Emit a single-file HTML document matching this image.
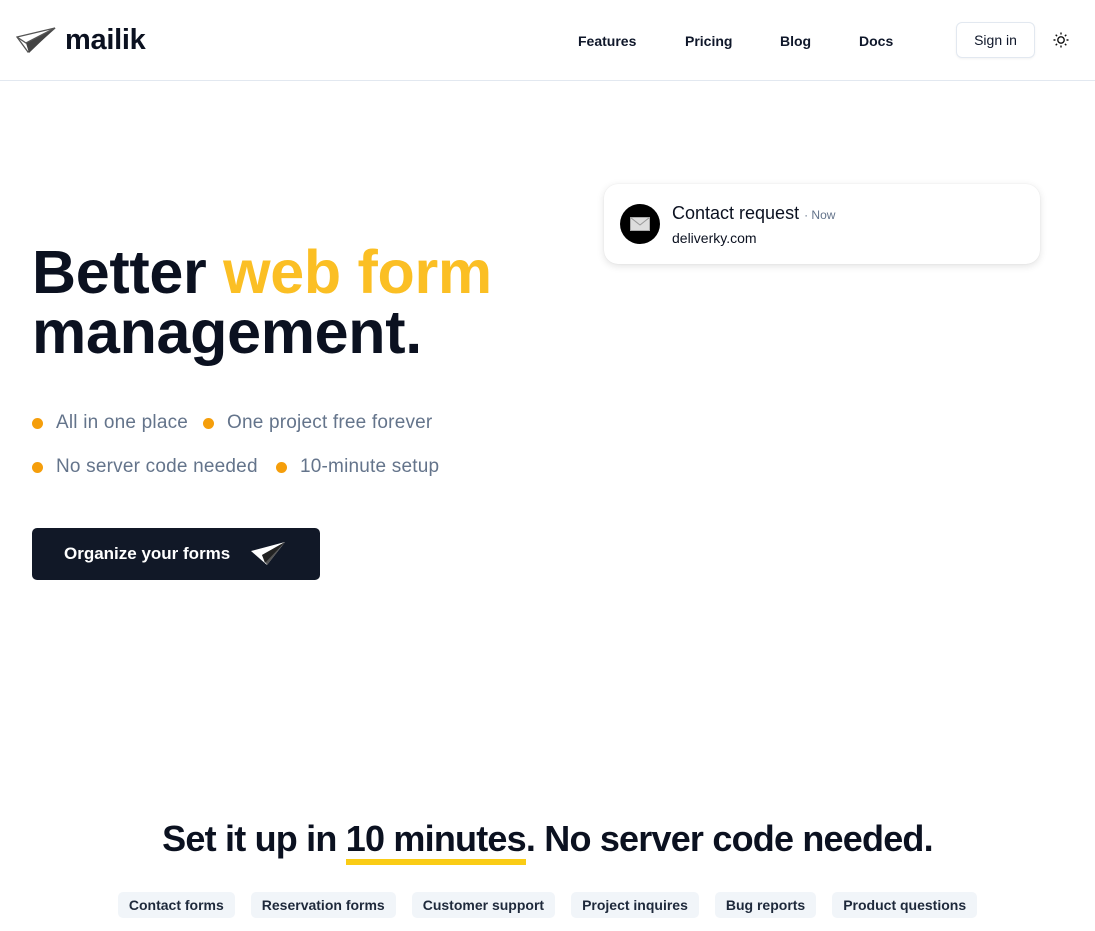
<!DOCTYPE html>
<html><head><meta charset="utf-8"><style>
*{margin:0;padding:0;box-sizing:border-box}
body{width:1095px;height:931px;overflow:hidden;background:#fff;font-family:"Liberation Sans",sans-serif;color:#0f172a;position:relative}
.hdr{position:absolute;left:0;top:0;width:1095px;height:81px;border-bottom:1px solid #e2e8f0}
.logo{position:absolute;left:16px;top:24px;display:flex;align-items:center}
.logo span{font-weight:700;font-size:29px;letter-spacing:-0.3px;margin-left:9px;color:#0b1120}
.nav a{position:absolute;top:33px;font-size:14px;font-weight:700;color:#0f172a;text-decoration:none}
.signin{position:absolute;left:956px;top:22px;width:79px;height:36px;border:1px solid #e2e8f0;border-radius:6px;font-size:14px;font-weight:500;text-align:center;line-height:34px;box-shadow:0 1px 2px rgba(0,0,0,.05)}
h1{position:absolute;left:32px;top:242px;font-size:61px;font-weight:900;line-height:60px;letter-spacing:-0.3px;color:#0b1120}
h1 .y{color:#fbbf24}
.b{position:absolute;font-size:19px;letter-spacing:0.2px;color:#64748b;display:flex;align-items:center}
.b i{display:inline-block;width:11px;height:11px;border-radius:50%;background:#f59e0b;margin-right:13px}
.btn{position:absolute;left:32px;top:528px;width:288px;height:52px;background:#111827;border-radius:5px;color:#fff;font-size:17px;font-weight:700;display:flex;align-items:center;padding-left:32px}
.card{position:absolute;left:604px;top:184px;width:436px;height:80px;border-radius:14px;background:#fff;box-shadow:0 2px 8px rgba(0,0,0,.12),0 0 1px rgba(0,0,0,.1)}
.av{position:absolute;left:16px;top:20px;width:40px;height:40px;border-radius:50%;background:#000}
h2{position:absolute;left:0;width:1095px;top:818px;text-align:center;font-size:36px;font-weight:700;letter-spacing:-0.8px;color:#0b1120}
h2 u{text-decoration:none;border-bottom:6px solid #facc15;padding-bottom:0}
.tags{position:absolute;top:892px;left:0;width:1095px;display:flex;justify-content:center;gap:16px}
.tags span{background:#f1f5f9;border-radius:5px;height:26px;line-height:26px;padding:0 11px;font-size:14px;font-weight:700;color:#1e293b}
</style></head><body>
<div class="hdr">
<div class="logo"><svg width="40" height="28" viewBox="0 0 40 28"><path d="M1 10 L39 1 L12 25 Z" fill="none" stroke="#555" stroke-width="1.3"/><path d="M10 16 L39 1 L13 26 Z" fill="#444"/><path d="M1 10 L10 16 L39 1" fill="none" stroke="#555" stroke-width="1.3"/></svg><span>mailik</span></div>
<div class="nav"><a style="left:578px">Features</a><a style="left:685px">Pricing</a><a style="left:780px">Blog</a><a style="left:859px">Docs</a></div>
<div class="signin">Sign in</div>
<svg style="position:absolute;left:1052px;top:31px" width="18" height="18" viewBox="0 0 18 18" stroke="#111" stroke-width="1.4" fill="none"><circle cx="9" cy="9" r="3.2"/><path d="M9 1.5v2M9 14.5v2M1.5 9h2M14.5 9h2M3.7 3.7l1.4 1.4M12.9 12.9l1.4 1.4M3.7 14.3l1.4-1.4M12.9 5.1l1.4-1.4"/></svg>
</div>
<div class="card"><div class="av"><svg style="position:absolute;left:10px;top:13px" width="20" height="14" viewBox="0 0 20 14"><rect x="0.5" y="0.5" width="19" height="13" fill="#ddd" stroke="#aaa"/><path d="M0.5 0.5 L10 8 L19.5 0.5" fill="none" stroke="#999"/></svg></div>
<div style="position:absolute;left:68px;top:19px;font-size:18px;color:#0b1120">Contact request <span style="font-size:12px;color:#64748b">· Now</span></div>
<div style="position:absolute;left:68px;top:46px;font-size:14px;color:#0b1120">deliverky.com</div></div>
<h1>Better <span class="y">web form</span><br>management.</h1>
<div class="b" style="left:32px;top:412px"><i></i>All in one place</div>
<div class="b" style="left:203px;top:412px"><i></i>One project free forever</div>
<div class="b" style="left:32px;top:456px"><i></i>No server code needed</div>
<div class="b" style="left:276px;top:456px"><i></i>10-minute setup</div>
<div class="btn">Organize your forms<svg style="margin-left:20px" width="36" height="26" viewBox="0 0 36 26"><path d="M1 10 L35 1 L17 24 Z" fill="#fff"/><path d="M12 14 L35 1 L17 24 Z" fill="#555"/><path d="M12 14 L35 1 L15 22 Z" fill="#222"/></svg></div>
<h2>Set it up in <u>10 minutes</u>. No server code needed.</h2>
<div class="tags"><span>Contact forms</span><span>Reservation forms</span><span>Customer support</span><span>Project inquires</span><span>Bug reports</span><span>Product questions</span></div>
</body></html>
